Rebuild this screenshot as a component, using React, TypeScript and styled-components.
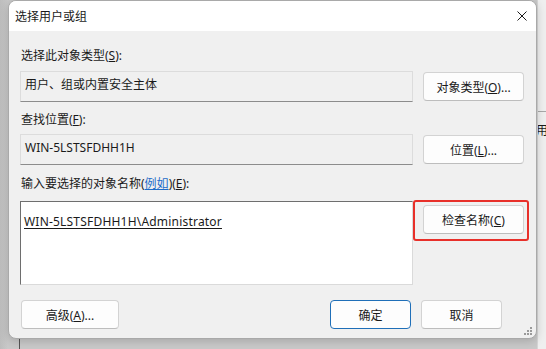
import React from 'react';
import styled, { createGlobalStyle } from 'styled-components';

const GlobalStyle = createGlobalStyle`
  html, body {
    margin: 0;
    padding: 0;
    width: 546px;
    height: 349px;
    overflow: hidden;
    background: #c2c2c2;
  }
  * { box-sizing: border-box; }
`;

const FONT = `"Noto Sans", "Noto Sans CJK SC", "Liberation Sans", sans-serif`;

// desktop with the window behind the dialog
const Desktop = styled.div`
  position: relative;
  width: 546px;
  height: 349px;
  padding-left: 8px;
  font-family: ${FONT};
  font-size: 12px;
  color: #1a1a1a;
  background: linear-gradient(to right, #bdbdbd 0, #c9c9c9 8px);
`;

const BackWindow = styled.div`
  position: absolute;
  left: 537px;
  top: 0;
  width: 9px;
  height: 349px;
  background: #efefef;
  border-left: 1px solid #d6d6d6;
  overflow: hidden;
`;

const BackLine = styled.div`
  position: absolute;
  left: 0;
  right: 0;
  top: 111px;
  border-top: 1px solid #a8a8a8;
`;

const BackText = styled.span`
  position: absolute;
  left: -2px;
  top: 121px;
  white-space: nowrap;
`;

const BackEdge = styled.div`
  position: absolute;
  left: 19px;
  top: 339px;
  width: 1px;
  height: 10px;
  background: #555;
`;

const Dialog = styled.div`
  position: relative;
  width: 529px;
  height: 339px;
  background: #f0f0f0;
  border: 1px solid #a9a9a9;
  border-radius: 8px;
  overflow: hidden;
  display: flex;
  flex-direction: column;
  box-shadow: 0 2px 10px rgba(0, 0, 0, 0.18);
`;

const TitleBar = styled.div`
  height: 30px;
  background: #ffffff;
  display: flex;
  align-items: center;
  justify-content: space-between;
  padding: 0 9px 0 6px;
  flex-shrink: 0;
`;

const Title = styled.span`
  font-size: 12px;
`;

const CloseButton = styled.span`
  width: 10px;
  height: 10px;
  display: flex;
`;

const Body = styled.div`
  flex: 1;
  display: flex;
  flex-direction: column;
  padding: 17px 12px 0 11px;
`;

const Label = styled.div<{ $gap?: number }>`
  height: 16px;
  line-height: 16px;
  margin-bottom: ${p => p.$gap ?? 7}px;
  padding-left: 1px;
  white-space: nowrap;
`;

const Row = styled.div<{ $align?: string; $gap?: number; $after: number }>`
  display: flex;
  align-items: ${p => p.$align ?? 'center'};
  gap: ${p => p.$gap ?? 10}px;
  margin-bottom: ${p => p.$after}px;
`;

const Field = styled.div`
  flex: 1;
  height: 31px;
  background: #f0f0f0;
  border: 1px solid #dcdcdc;
  border-bottom-color: #8c8c8c;
  line-height: 16px;
  padding: 5px 0 0 4px;
`;

const TextArea = styled.div`
  flex: 1;
  height: 84px;
  background: #ffffff;
  border: 1px solid #dadada;
  border-top-color: #6e6e6e;
  border-left-color: #6e6e6e;
  padding: 11px 3px;
`;

const NameText = styled.span`
  text-decoration: underline;
  text-underline-offset: 2px;
  letter-spacing: 0.2px;
`;

const Button = styled.button<{ $width: number; $default?: boolean }>`
  width: ${p => p.$width}px;
  height: 29px;
  font-family: ${FONT};
  font-size: 12px;
  color: #1a1a1a;
  background: #fdfdfd;
  border: 1px solid ${p => (p.$default ? '#1f6fb8' : '#d3d3d3')};
  border-bottom-color: ${p => (p.$default ? '#1f6fb8' : '#bdbdbd')};
  border-radius: 4px;
  padding: 0;
  flex-shrink: 0;
  white-space: nowrap;
`;

const Highlight = styled.div`
  width: 116px;
  margin-right: -5px;
  margin-top: -1px;
  padding: 3px 3px 5px 8px;
  border: 2px solid #e8302a;
  border-radius: 3px;
  flex-shrink: 0;
`;

const Link = styled.span`
  color: #1e6cc8;
  text-decoration: underline;
`;

const Footer = styled.div`
  display: flex;
  gap: 10px;
  padding: 0 22px 0 1px;
`;

const Spacer = styled.div`
  flex: 1;
`;

const Grip = styled.svg`
  position: absolute;
  right: 4px;
  bottom: 3px;
`;

const Close = () => (
  <svg width="10" height="10" viewBox="0 0 10 10">
    <path d="M0.5 0.5 L9.5 9.5 M9.5 0.5 L0.5 9.5" stroke="#1a1a1a" strokeWidth="1" />
  </svg>
);

export default function App() {
  return (
    <>
      <GlobalStyle />
      <Desktop>
        <BackWindow>
          <BackLine />
          <BackText>用)</BackText>
        </BackWindow>
        <BackEdge />
        <Dialog>
          <TitleBar>
            <Title>选择用户或组</Title>
            <CloseButton><Close /></CloseButton>
          </TitleBar>
          <Body>
            <Label>选择此对象类型(<u>S</u>):</Label>
            <Row $after={10}>
              <Field>用户、组或内置安全主体</Field>
              <Button $width={101}>对象类型(<u>O</u>)...</Button>
            </Row>
            <Label $gap={6}>查找位置(<u>F</u>):</Label>
            <Row $after={11}>
              <Field>WIN-5LSTSFDHH1H</Field>
              <Button $width={101}>位置(<u>L</u>)...</Button>
            </Row>
            <Label $gap={9}>输入要选择的对象名称(<Link>例如</Link>)(<u>E</u>):</Label>
            <Row $align="flex-start" $gap={0} $after={15}>
              <TextArea>
                <NameText>WIN-5LSTSFDHH1H\Administrator</NameText>
              </TextArea>
              <Highlight>
                <Button $width={101}>检查名称(<u>C</u>)</Button>
              </Highlight>
            </Row>
            <Footer>
              <Button $width={98}>高级(<u>A</u>)...</Button>
              <Spacer />
              <Button $width={81} $default>确定</Button>
              <Button $width={81}>取消</Button>
            </Footer>
          </Body>
          <Grip width="8" height="8" viewBox="0 0 8 8">
            <g fill="#9a9a9a">
              <rect x="6" y="0" width="2" height="2" />
              <rect x="3" y="3" width="2" height="2" />
              <rect x="6" y="3" width="2" height="2" />
              <rect x="0" y="6" width="2" height="2" />
              <rect x="3" y="6" width="2" height="2" />
              <rect x="6" y="6" width="2" height="2" />
            </g>
          </Grip>
        </Dialog>
      </Desktop>
    </>
  );
}
